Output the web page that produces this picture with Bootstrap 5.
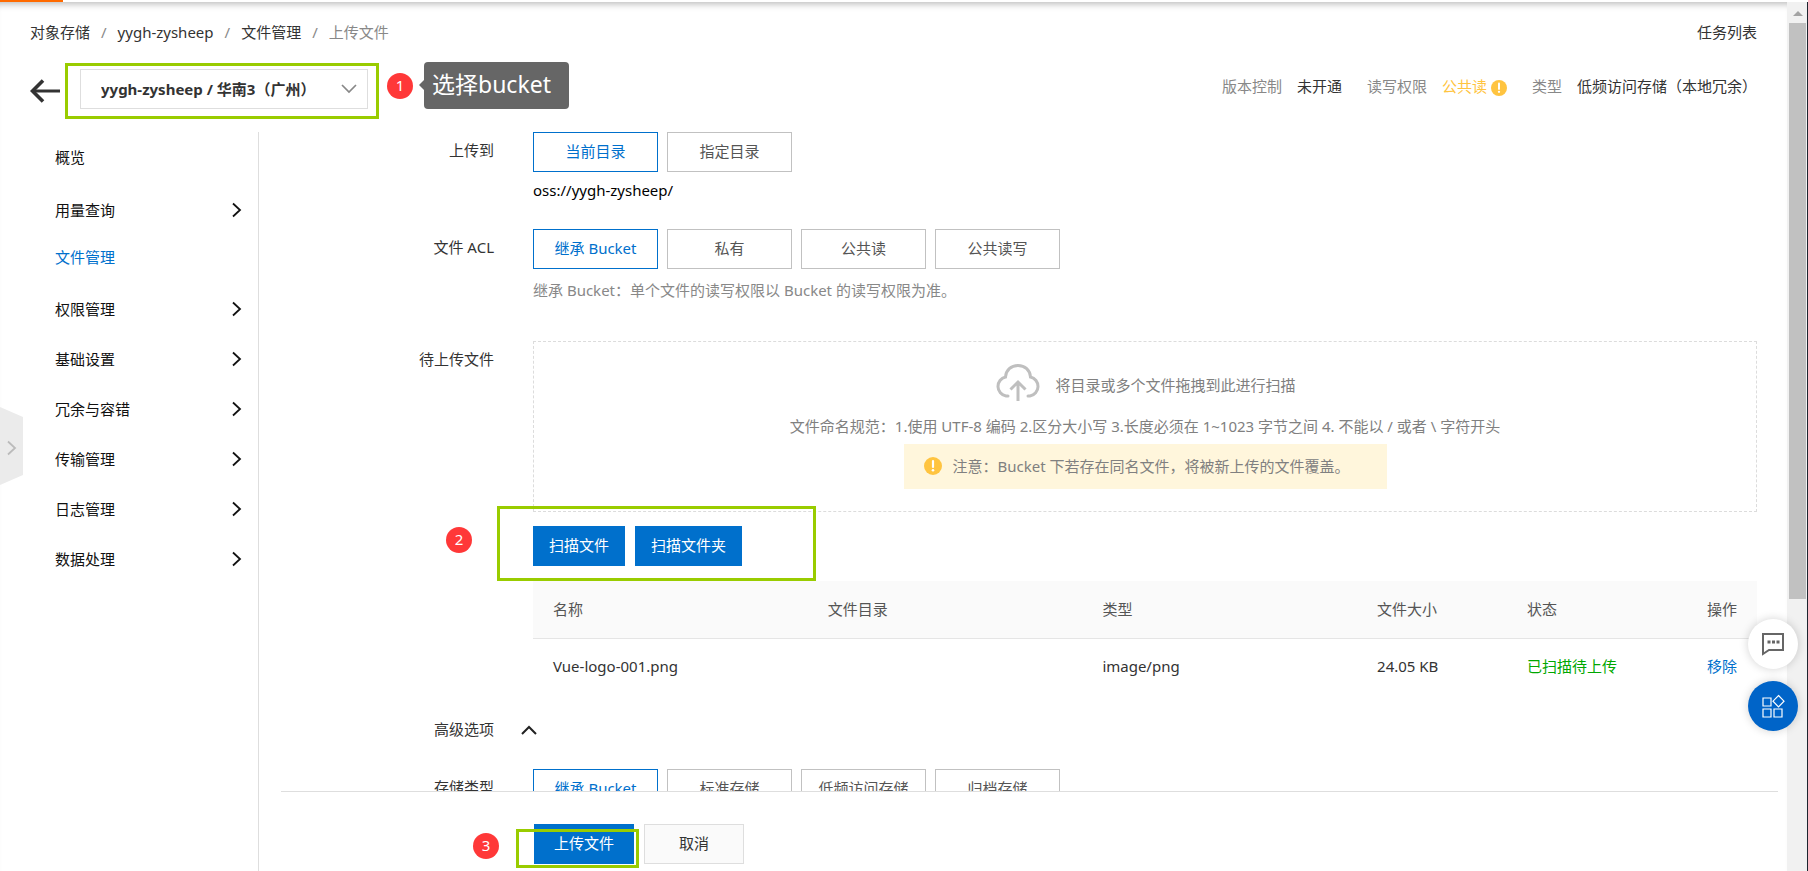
<!DOCTYPE html>
<html lang="zh-CN">
<head>
<meta charset="utf-8">
<meta name="viewport" content="width=device-width, initial-scale=1">
<title>上传文件 - 对象存储</title>
<link rel="stylesheet" href="https://cdn.jsdelivr.net/npm/bootstrap@5.3.0/dist/css/bootstrap.min.css">
<style>
  :root { --blue: #0070cc; --mark: #99cc00; --line: #dedede; }
  body { font: 15px/20px "Noto Sans", "Noto Sans CJK SC", sans-serif; color: #333; }
  a { color: inherit; text-decoration: none; }
  .workspace { position: relative; min-width: 0; box-shadow: inset 0 8px 7px -6px rgba(0,0,0,.28); margin-top: 2px; }
  .tab-line { left: 0; top: 0; width: 63px; height: 2px; background: #ff6a00; }

  .crumbs { padding: 20px 30px 21px; }
  .crumbs .breadcrumb { --bs-breadcrumb-item-padding-x: 11px; --bs-breadcrumb-divider-color: #888; --bs-breadcrumb-item-active-color: #888; }

  .bucket-bar { padding: 0 30px 13px; }
  .back { width: 30px; margin-right: 5px; }
  .pick { border: 3px solid var(--mark); width: 314px; height: 56px; padding: 3px 8px 7px 12px; }
  .pick select { height: 40px; width: 288px; border: 1px solid var(--line); border-radius: 0; padding: 0 40px 0 20px; font-size: 15px; font-weight: 700; color: #333;
    background: #fff url("data:image/svg+xml,%3Csvg xmlns='http://www.w3.org/2000/svg' viewBox='0 0 16 10'%3E%3Cpath d='M1 1l7 7 7-7' fill='none' stroke='%23888' stroke-width='1.7'/%3E%3C/svg%3E") no-repeat right 10px top 14px / 16px 10px; }
  .step { width: 26px; height: 26px; line-height: 24px; border-radius: 50%; background: #ff3838; color: #fff; text-align: center; }
  .tip { position: relative; margin-left: 11px; height: 47px; line-height: 45px; padding: 0 18px 0 8px; border-radius: 4px; background: #666; color: #fff; font-size: 23px; }
  .tip::before { content: ""; position: absolute; left: -5px; top: 18px; border: 5px solid transparent; border-right-color: #666; border-left: 0; }
  .tip-row { margin: -1px 0 0 8px; }
  .facts { line-height: 46px; white-space: nowrap; }
  .facts dt, .facts dd { font-weight: 400; margin: 0 15px 0 0; color: #888; }
  .facts dd { color: #333; margin-right: 25px; }
  .facts dd:last-child { margin-right: 0; }
  .facts .warn { color: #ffc440; }

  .side { width: 259px; border-right: 1px solid var(--line); }
  .side a { display: flex; align-items: center; justify-content: space-between; height: 50px; padding: 0 16px 0 55px; color: #111; }
  .side a.lone { margin-bottom: 3px; }
  .side a.now { height: 44px; color: var(--blue); margin-bottom: 5px; }
  .fold { left: 0; top: 407px; width: 23px; height: 78px; padding: 0; border: 0; background: #ebebeb; clip-path: polygon(0 0, 100% 10px, 100% 68px, 0 100%); }

  .panel { padding: 0 30px 0 0; }
  .field { display: flex; }
  .field > .tag { width: 235px; flex: none; text-align: right; margin-right: 39px; line-height: 20px; padding-top: 8px; }
  .pills { display: flex; gap: 9px; }
  .pills .btn { width: 125px; height: 40px; line-height: 36px; padding: 0; border-radius: 0; border: 1px solid #c1c1c1; color: #555; background: #fff; font-size: 15px; }
  .pills .btn-check:checked + .btn { border-color: var(--blue); color: var(--blue); background: #fff; }
  .act { height: 40px; padding: 0 16px 2px; border: 0; border-radius: 0; background: var(--blue); color: #fff; font-size: 15px; }
  .act.alt { background: #fafafa; color: #333; border: 1px solid var(--line); }
  .wide { width: 100px; padding: 0 0 2px; }
  .drop { border: 1px dashed #dcdcdc; height: 171px; padding-top: 22px; color: #808080; }
  .notice { width: 483px; height: 45px; background: #fff6dc; padding: 0 0 2px 20px; }
  .frame { position: absolute; border: 3px solid var(--mark); pointer-events: none; }
  .f-scan { left: -36px; top: -20px; width: 319px; height: 75px; z-index: 1; }
  .f-send { left: -18px; top: 5px; width: 123px; height: 39px; }
  .s-scan { position: absolute; left: -87px; top: 1px; }
  .s-send { position: absolute; left: -61px; top: 9px; }

  .files { table-layout: fixed; margin: 15px 0 0; --bs-table-bg: transparent; color: #333; }
  .files th { font-weight: 400; color: #555; height: 57px; background: #fafafa; border-bottom: 1px solid #e5e5e5; }
  .files td { height: 56px; border: 0; }
  .files th, .files td { padding: 0 0 1px 20px; vertical-align: middle; }

  .foot { margin: 0 9px 0 22px; padding: 32px 0 7px 253px; border-top: 1px solid var(--line); }
  .rail { width: 21px; margin-top: 2px; background: #f1f1f1; border-right: 1px solid #1d2530; padding: 9px 1px 0 2px; }
  .rail i { display: block; height: 67%; margin-top: 7px; background: #c1c1c1; }
  .float { right: 10px; bottom: 140px; gap: 12px; }
  .orb { width: 50px; height: 50px; border: 0; border-radius: 50%; background: #fff; box-shadow: 0 0 10px rgba(0,0,0,.18); padding: 0; }
  .orb.main { background: #0064c8; }
</style>
</head>
<body class="d-flex vh-100 overflow-hidden position-relative">

<svg class="d-none">
  <symbol id="more" viewBox="0 0 10 16"><path d="M1 1.500L8 8 1 14.500" fill="none" stroke="currentColor" stroke-width="1.800"/></symbol>
  <symbol id="alert" viewBox="0 0 18 18"><circle cx="9" cy="9" r="9" fill="#ffc440"/><path d="M9 4v6" stroke="#fff" stroke-width="2.200" stroke-linecap="round"/><circle cx="9" cy="13.300" r="1.300" fill="#fff"/></symbol>
</svg>

<div class="tab-line position-absolute"></div>

<div class="workspace d-flex flex-column flex-grow-1">
  <nav class="crumbs d-flex justify-content-between">
    <ol class="breadcrumb m-0">
      <li class="breadcrumb-item"><a href="#">对象存储</a></li>
      <li class="breadcrumb-item"><a href="#">yygh-zysheep</a></li>
      <li class="breadcrumb-item"><a href="#">文件管理</a></li>
      <li class="breadcrumb-item active">上传文件</li>
    </ol>
    <a href="#">任务列表</a>
  </nav>

  <header class="bucket-bar d-flex">
    <a class="back d-flex align-items-center" href="#" aria-label="返回"><svg width="30" height="24" viewBox="0 0 30 24"><path d="M13 1.500L2.500 12 13 22.500" fill="none" stroke="#333" stroke-width="3.600"/><path d="M3 12h27" stroke="#333" stroke-width="3"/></svg></a>
    <div class="pick"><select aria-label="Bucket" class="form-select"><option>yygh-zysheep / 华南3（广州）</option></select></div>
    <div class="tip-row d-flex align-items-center align-self-start">
      <span class="step">1</span>
      <span class="tip">选择bucket</span>
    </div>
    <dl class="facts d-flex ms-auto mb-0">
      <dt>版本控制</dt><dd>未开通</dd>
      <dt>读写权限</dt><dd class="warn">公共读<svg class="ms-1" width="16" height="16"><use href="#alert"/></svg></dd>
      <dt>类型</dt><dd>低频访问存储（本地冗余）</dd>
    </dl>
  </header>

  <div class="d-flex flex-grow-1 overflow-hidden">
    <nav class="side flex-shrink-0">
      <a class="lone" href="#">概览</a>
      <a href="#">用量查询<svg width="10" height="16"><use href="#more"/></svg></a>
      <a class="now" href="#">文件管理</a>
      <a href="#">权限管理<svg width="10" height="16"><use href="#more"/></svg></a>
      <a href="#">基础设置<svg width="10" height="16"><use href="#more"/></svg></a>
      <a href="#">冗余与容错<svg width="10" height="16"><use href="#more"/></svg></a>
      <a href="#">传输管理<svg width="10" height="16"><use href="#more"/></svg></a>
      <a href="#">日志管理<svg width="10" height="16"><use href="#more"/></svg></a>
      <a href="#">数据处理<svg width="10" height="16"><use href="#more"/></svg></a>
    </nav>

    <main class="d-flex flex-column flex-grow-1 overflow-hidden">
      <form class="panel flex-grow-1 overflow-hidden">
        <div class="field">
          <span class="tag">上传到</span>
          <div>
            <div class="pills">
              <input class="btn-check" type="radio" name="dir" id="dir1" checked><label class="btn" for="dir1">当前目录</label>
              <input class="btn-check" type="radio" name="dir" id="dir2"><label class="btn" for="dir2">指定目录</label>
            </div>
            <div class="text-black" style="margin-top:8px">oss://yygh-zysheep/</div>
          </div>
        </div>

        <div class="field" style="margin-top:29px">
          <span class="tag">文件 ACL</span>
          <div>
            <div class="pills">
              <input class="btn-check" type="radio" name="acl" id="acl1" checked><label class="btn" for="acl1">继承 Bucket</label>
              <input class="btn-check" type="radio" name="acl" id="acl2"><label class="btn" for="acl2">私有</label>
              <input class="btn-check" type="radio" name="acl" id="acl3"><label class="btn" for="acl3">公共读</label>
              <input class="btn-check" type="radio" name="acl" id="acl4"><label class="btn" for="acl4">公共读写</label>
            </div>
            <div style="margin-top:11px;color:#888">继承 Bucket：单个文件的读写权限以 Bucket 的读写权限为准。</div>
          </div>
        </div>

        <div class="field" style="margin-top:41px">
          <span class="tag">待上传文件</span>
          <div class="flex-grow-1">
            <div class="drop d-flex flex-column align-items-center">
              <div class="d-flex align-items-center">
                <svg width="46" height="38" viewBox="0 0 46 38" fill="none" stroke="#bfbfbf" stroke-width="3"><path d="M13 32h-2A9.700 9.700 0 0 1 10.500 13C11 6 16 1.500 23 1.500S35 6 35.500 13A9.700 9.700 0 0 1 35 32h-2" stroke-linecap="round"/><path d="M23 37V18M15.500 25.500L23 18l7.500 7.500"/></svg>
                <span style="margin:3px 0 0 15px">将目录或多个文件拖拽到此进行扫描</span>
              </div>
              <div style="margin:14px 0 8px">文件命名规范：1.使用 UTF-8 编码 2.区分大小写 3.长度必须在 1~1023 字节之间 4. 不能以 / 或者 \ 字符开头</div>
              <div class="notice d-flex align-items-center"><svg width="18" height="18" style="margin-right:11px"><use href="#alert"/></svg>注意：Bucket 下若存在同名文件，将被新上传的文件覆盖。</div>
            </div>
            <div class="position-relative d-flex" style="gap:10px;margin-top:14px">
              <span class="step s-scan">2</span>
              <button type="button" class="act">扫描文件</button>
              <button type="button" class="act">扫描文件夹</button>
              <span class="frame f-scan"></span>
            </div>
            <table class="files table">
              <colgroup><col><col><col><col style="width:150px"><col style="width:180px"><col style="width:70px"></colgroup>
              <thead><tr><th>名称</th><th>文件目录</th><th>类型</th><th>文件大小</th><th>状态</th><th>操作</th></tr></thead>
              <tbody><tr><td>Vue-logo-001.png</td><td></td><td>image/png</td><td>24.05 KB</td><td style="color:#00a700">已扫描待上传</td><td><a href="#" style="color:#0070cc">移除</a></td></tr></tbody>
            </table>
          </div>
        </div>

        <div class="field" style="margin-top:17px">
          <span class="tag">高级选项</span>
          <svg width="16" height="10" viewBox="0 0 16 10" style="margin:14px 0 0 -12px"><path d="M1 9l7-7 7 7" fill="none" stroke="#222" stroke-width="2"/></svg>
        </div>

        <div class="field" style="margin-top:30px">
          <span class="tag">存储类型</span>
          <div class="pills">
            <input class="btn-check" type="radio" name="cls" id="cls1" checked><label class="btn" for="cls1">继承 Bucket</label>
            <input class="btn-check" type="radio" name="cls" id="cls2"><label class="btn" for="cls2">标准存储</label>
            <input class="btn-check" type="radio" name="cls" id="cls3"><label class="btn" for="cls3">低频访问存储</label>
            <input class="btn-check" type="radio" name="cls" id="cls4"><label class="btn" for="cls4">归档存储</label>
          </div>
        </div>
      </form>

      <footer class="foot">
        <div class="position-relative d-flex" style="gap:10px">
          <span class="step s-send">3</span>
          <button type="button" class="act wide">上传文件</button>
          <button type="button" class="act alt wide">取消</button>
          <span class="frame f-send"></span>
        </div>
      </footer>
    </main>
  </div>
</div>

<div class="rail flex-shrink-0" aria-hidden="true">
  <svg class="d-block mx-auto" width="10" height="5"><path d="M0 5L5 0l5 5z" fill="#a3a3a3"/></svg>
  <i></i>
</div>

<button class="fold position-absolute" aria-label="展开"><svg width="10" height="16" style="color:#bbb"><use href="#more"/></svg></button>

<div class="float position-absolute d-flex flex-column">
  <button class="orb" aria-label="咨询"><svg width="24" height="24" viewBox="0 0 24 24"><path d="M2 2h20v16H8l-6 4z" fill="none" stroke="#666" stroke-width="2"/><path d="M6.500 10h3m1.500 0h3m1.500 0h3" stroke="#666" stroke-width="3"/></svg></button>
  <button class="orb main" aria-label="应用"><svg width="24" height="24" viewBox="0 0 24 24" fill="none" stroke="#fff" stroke-width="1.200"><path d="M2 4h8v8H2zM2 15h8v8H2zM13 15h8v8h-8zM17.500 1.500L23 7.200 17.500 13 12 7.200z"/></svg></button>
</div>

<script src="https://cdn.jsdelivr.net/npm/bootstrap@5.3.0/dist/js/bootstrap.bundle.min.js"></script>
</body>
</html>
